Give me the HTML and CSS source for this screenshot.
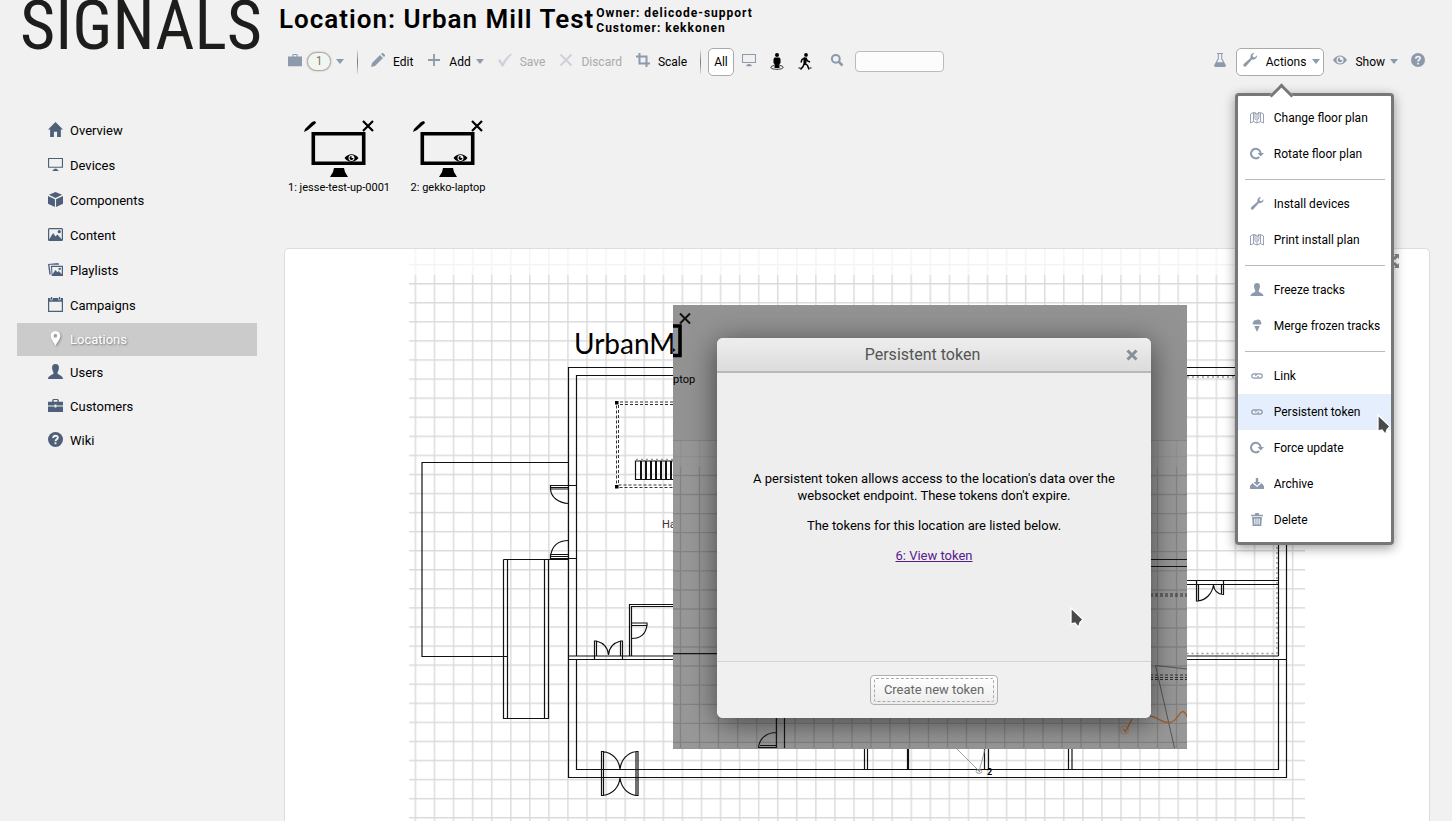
FILE: index.html
```html
<!DOCTYPE html>
<html lang="en">
<head>
<meta charset="utf-8">
<title>Location: Urban Mill Test</title>
<link rel="stylesheet" href="styles.css">
</head>
<body>
<svg class="sprite" aria-hidden="true">
  <symbol id="i-home" viewBox="0 0 14 14"><path d="M7 0 14 7H12V14H8.500V9H5.500V14H2V7H0Z"/></symbol>
  <symbol id="i-screen" viewBox="0 0 16 14"><path fill-rule="evenodd" d="M0 0H16V10.500H0ZM1.200 1.200V9.300H14.800V1.200ZM6.500 11.500H9.500V12.500H11V14H5V12.500H6.500Z"/></symbol>
  <symbol id="i-cube" viewBox="0 0 16 16"><path d="M8 0 15 3 8 6.500 1 3ZM0 4.200 7.400 7.800V16L0 12.500ZM16 4.200 8.600 7.800V16L16 12.500Z"/></symbol>
  <symbol id="i-image" viewBox="0 0 16 14"><path fill-rule="evenodd" d="M1 0H15L16 1V13L15 14H1L0 13V1ZM1.300 1.300V12L5.500 5.500 8 9 10 7 14.700 12V1.300Z"/><circle cx="12" cy="4" r="1.700"/></symbol>
  <symbol id="i-images" viewBox="0 0 16 14"><path d="M0 1 11 0 12 2H1.500L3 12 1.500 12.500Z"/><path fill-rule="evenodd" d="M3 3H16V14H4ZM4.300 4.300 4.800 12 8 7.500 10 10 11.500 8.500 14.700 12V4.300Z"/><circle cx="12.500" cy="6.300" r="1.300"/></symbol>
  <symbol id="i-calendar" viewBox="0 0 16 16"><path fill-rule="evenodd" d="M0 1H2.500V3.500H5V1H11V3.500H13.500V1H16V16H0ZM1.300 5V14.600H14.700V5Z"/><path d="M3 0H4.500V3H3ZM11.500 0H13V3H11.500Z"/></symbol>
  <symbol id="i-pin" viewBox="0 0 10 14"><path fill-rule="evenodd" d="M5 0C8 0 9.500 2 9.500 4.500 9.500 7.500 6.500 10.500 5 14 3.500 10.500 .5 7.500 .5 4.500 .5 2 2 0 5 0ZM5 2.800A1.700 1.700 0 1 0 5 6.300 1.700 1.700 0 1 0 5 2.800Z"/></symbol>
  <symbol id="i-user" viewBox="0 0 14 14"><path d="M7 0C9.300 0 10.300 1.500 10.200 3.700 10.100 6 9 7 8.800 8.500 8.800 10.500 14 10.500 14 14H0C0 10.500 5.200 10.500 5.200 8.500 5 7 3.900 6 3.800 3.700 3.700 1.500 4.700 0 7 0Z"/></symbol>
  <symbol id="i-case" viewBox="0 0 16 14"><path fill-rule="evenodd" d="M5 3V1L6 0H10L11 1V3H16V14H0V3ZM6.200 3H9.800V1.200H6.200Z"/></symbol>
  <symbol id="i-case2" viewBox="0 0 16 14"><path fill-rule="evenodd" d="M4.500 3V1L5.500 0H10.500L11.500 1V3H16V7H9V6H7V7H0V3ZM6 3H10V1.200H6ZM0 8H7V9H9V8H16V14H0Z"/></symbol>
  <symbol id="i-help" viewBox="0 0 16 16"><circle cx="8" cy="8" r="8"/><path fill="none" stroke="#f1f1f1" stroke-width="2" d="M5.500 6.500C5.500 3.300 10.700 3.300 10.500 6 10.400 7.700 8 7.700 8 9.800"/><path fill="#f1f1f1" d="M7 11H9V13H7Z"/></symbol>
  <symbol id="i-pencil" viewBox="0 0 14 14"><path d="M9 2 12 5 4 13 0 14 1 10ZM10 1 11 0H12L14 2V3L13 4Z"/></symbol>
  <symbol id="i-plus" viewBox="0 0 14 14"><path d="M6.100 1H7.900V6.100H13V7.900H7.900V13H6.100V7.900H1V6.100H6.100Z"/></symbol>
  <symbol id="i-check" viewBox="0 0 14 13"><path d="M0 7 2 5.500 4.500 9.500C6.500 5.500 9 2.500 13 0L14 1C10.500 4 7.500 8 5.500 13H4Z"/></symbol>
  <symbol id="i-x" viewBox="0 0 14 14"><path fill="none" stroke="currentColor" stroke-width="2" d="M1.500 1.500 12.500 12.500M12.500 1.500 1.500 12.500"/></symbol>
  <symbol id="i-crop" viewBox="0 0 14 14"><path fill="none" stroke="currentColor" stroke-width="2" d="M0 3.500H10.500V14M3.500 0V10.500H14"/></symbol>
  <symbol id="i-search" viewBox="0 0 14 14"><g fill="none" stroke="currentColor"><circle cx="5.800" cy="5.800" r="3.900" stroke-width="2"/><path stroke-width="2.500" d="M8.500 8.500 12.500 12.500"/></g></symbol>
  <symbol id="i-caret" viewBox="0 0 8 5"><path d="M0 0H8L4 5Z"/></symbol>
  <symbol id="i-stand" viewBox="0 0 14 17"><circle cx="7" cy="2" r="2"/><path d="M4.500 4.500H9.500L10.500 6V10L9.500 11V15H4.500V11L3.500 10V6Z"/><path fill="none" stroke="currentColor" stroke-width=".8" d="M4 12.500C-1 13.500 0 16.300 7 16.300S15 13.500 10 12.500"/></symbol>
  <symbol id="i-walk" viewBox="0 0 13 17"><circle cx="7.500" cy="1.900" r="1.900"/><path fill="none" stroke="currentColor" stroke-width="1.500" d="M6 10 9 12.500 10.500 16.500M6 10 4.500 13.500 2 16.500M6.500 5 3.500 6.500 2.500 9.500M7.500 5.500 9 8 11.500 9"/><path d="M5 4.500 8.500 4.500 7.800 10.500H5ZM0 14.500H2V15.500H0ZM11 14.500H13V15.500H11Z"/></symbol>
  <symbol id="i-flask" viewBox="0 0 12 14"><path fill-rule="evenodd" d="M3 0H9V1H8.200V5.500L12 12.500 11 14H1L0 12.500 3.800 5.500V1H3ZM4.800 1V6L3 9.200H9L7.200 6V1Z"/></symbol>
  <symbol id="i-wrench" viewBox="0 0 14 14"><path d="M11.500 0 9.500 2.300 10 4 11.700 4.500 14 2.300C14.300 5 12.200 7.200 9 6.500L3 13.200C2 14.600-.6 13 .7 11L7.500 5C7 2 8.600-.3 11.500 0Z"/></symbol>
  <symbol id="i-eye" viewBox="0 0 14 9"><path fill-rule="evenodd" d="M0 4.500C4-1.500 10-1.500 14 4.500 10 10.500 4 10.500 0 4.500ZM7 1A3.500 3.500 0 1 0 7 8 3.500 3.500 0 1 0 7 1Z"/><path d="M7 2.200V4.500H9.300A2.300 2.300 0 1 1 7 2.200Z"/></symbol>
  <symbol id="i-map" viewBox="0 0 14 12"><path fill="none" stroke="currentColor" stroke-width=".9" d="M.5 2.500 3.500 1 7 2.500 10.500 1 13.500 2.500V11.500L10.500 10 7 11.500 3.500 10 .5 11.500ZM3.500 1V10M7 2.500V11.500M10.500 1V10M5 .5V7L6 8.500M8.500 .5 9 5 8 8"/></symbol>
  <symbol id="i-rotate" viewBox="0 0 14 12"><path fill="none" stroke="currentColor" stroke-width="2" d="M9.200 9.500A4.800 4.800 0 1 1 10.600 5.500"/><path d="M7.500 5.500H14L10.700 9Z"/></symbol>
  <symbol id="i-ice" viewBox="0 0 10 14"><path d="M1 6C0 5 0 4 1 3.500 1 1.500 3 1 4 1.500 5 0 9 0 9 3 10.300 4 10 5 9 6ZM2 7.500H8L5 14Z"/></symbol>
  <symbol id="i-link" viewBox="0 0 12 6"><path fill="none" stroke="currentColor" stroke-width="1.200" d="M5.300 .8H3A2.200 2.200 0 0 0 3 5.200H5.500A2 2 0 0 0 7.200 2.800M6.700 5.200H9A2.200 2.200 0 0 0 9 .8H6.500A2 2 0 0 0 4.800 3.200"/></symbol>
  <symbol id="i-archive" viewBox="0 0 14 11"><path d="M5.800 0H8.200V4H10.500L7 7.500 3.500 4H5.800ZM2.500 5 4 6.500 7 9 10 6.500 11.500 5 14 8V11H0V8Z"/></symbol>
  <symbol id="i-trash" viewBox="0 0 11 12"><path fill-rule="evenodd" d="M0 1.500H3.500L4 0H7L7.500 1.500H11V3H0ZM1 3.800H10L9.500 12H1.500ZM3 5V10.500H4V5ZM5 5V10.500H6V5ZM7 5V10.500H8V5Z"/></symbol>
  <symbol id="i-expand" viewBox="0 0 14 14"><path d="M0 0H5L3.500 1.500 6 4 4 6 1.500 3.500 0 5ZM14 0V5L12.500 3.500 10 6 8 4 10.500 1.500 9 0ZM0 14V9L1.500 10.500 4 8 6 10 3.500 12.500 5 14ZM14 14H9L10.500 12.500 8 10 10 8 12.500 10.500 14 9Z"/></symbol>
  <symbol id="i-cursor" viewBox="0 0 14 22"><path fill="#4a4a4a" stroke="#fff" stroke-width="1.300" d="M1 1V17L5 16 8.500 20.500 10 15.500 13 12.500Z"/></symbol>
  <symbol id="i-device" viewBox="0 0 72 58"><path d="M1 12 2 9 9 2 12 1 13 3 5 10Z"/><path fill="none" stroke="currentColor" stroke-width="2.200" d="M60 1 70 11M70 1 60 11"/><path fill="none" stroke="currentColor" stroke-width="3.600" d="M10.300 13.800H60.700V43.200H10.300Z"/><path d="M31 48H41L42 52 45 57H27L30 52Z"/><path fill-rule="evenodd" d="M41.500 38C45.500 33 51.500 33 55.500 38 51.500 43 45.500 43 41.500 38ZM48.500 35A3 3 0 1 0 48.500 41 3 3 0 1 0 48.500 35Z"/><path d="M48.500 36V38H50.500A2 2 0 1 1 48.500 36Z"/></symbol>
</svg>

<div class="app">
  <aside class="sidebar">
    <div class="logo">SIGNALS</div>
    <nav class="nav">
      <a class="nav-item" href="#"><svg class="nav-icon"><use href="#i-home"/></svg>Overview</a>
      <a class="nav-item" href="#"><svg class="nav-icon"><use href="#i-screen"/></svg>Devices</a>
      <a class="nav-item" href="#"><svg class="nav-icon"><use href="#i-cube"/></svg>Components</a>
      <a class="nav-item" href="#"><svg class="nav-icon"><use href="#i-image"/></svg>Content</a>
      <a class="nav-item" href="#"><svg class="nav-icon"><use href="#i-images"/></svg>Playlists</a>
      <a class="nav-item" href="#"><svg class="nav-icon"><use href="#i-calendar"/></svg>Campaigns</a>
      <a class="nav-item compact active" href="#"><svg class="nav-icon"><use href="#i-pin"/></svg>Locations</a>
      <a class="nav-item compact" href="#"><svg class="nav-icon"><use href="#i-user"/></svg>Users</a>
      <a class="nav-item" href="#"><svg class="nav-icon"><use href="#i-case2"/></svg>Customers</a>
      <a class="nav-item compact" href="#"><svg class="nav-icon"><use href="#i-help"/></svg>Wiki</a>
    </nav>
  </aside>

  <main class="main">
    <header class="heading">
      <h1 class="title">Location: Urban Mill Test</h1>
      <div class="owner">Owner: delicode-support<br>Customer: kekkonen</div>
    </header>

    <div class="toolbar">
      <button class="tool tight" aria-label="Workspace"><svg class="icon"><use href="#i-case"/></svg><span class="badge">1</span><svg class="caret"><use href="#i-caret"/></svg></button>
      <span class="divider"></span>
      <button class="tool"><svg class="icon"><use href="#i-pencil"/></svg>Edit</button>
      <button class="tool"><svg class="icon"><use href="#i-plus"/></svg>Add<svg class="caret"><use href="#i-caret"/></svg></button>
      <button class="tool" disabled><svg class="icon"><use href="#i-check"/></svg>Save</button>
      <button class="tool" disabled><svg class="icon"><use href="#i-x"/></svg>Discard</button>
      <button class="tool"><svg class="icon"><use href="#i-crop"/></svg>Scale</button>
      <span class="divider"></span>
      <div class="filters">
        <button class="tool boxed all">All</button>
        <button class="tool" aria-label="Screens"><svg class="icon"><use href="#i-screen"/></svg></button>
        <button class="tool dark" aria-label="Standing"><svg class="figure"><use href="#i-stand"/></svg></button>
        <button class="tool dark" aria-label="Walking"><svg class="figure"><use href="#i-walk"/></svg></button>
      </div>
      <label class="search"><svg class="icon"><use href="#i-search"/></svg><input class="search-input" type="text" aria-label="Search"></label>
      <div class="tools-right">
        <button class="tool" aria-label="Experiments"><svg class="icon"><use href="#i-flask"/></svg></button>
        <div class="menu-anchor">
          <button class="tool boxed actions"><svg class="icon"><use href="#i-wrench"/></svg>Actions<svg class="caret"><use href="#i-caret"/></svg></button>
          <div class="menu">
            <button class="menu-item"><svg class="menu-icon"><use href="#i-map"/></svg>Change floor plan</button>
            <button class="menu-item"><svg class="menu-icon"><use href="#i-rotate"/></svg>Rotate floor plan</button>
            <hr class="menu-rule">
            <button class="menu-item"><svg class="menu-icon"><use href="#i-wrench"/></svg>Install devices</button>
            <button class="menu-item"><svg class="menu-icon"><use href="#i-map"/></svg>Print install plan</button>
            <hr class="menu-rule">
            <button class="menu-item"><svg class="menu-icon"><use href="#i-user"/></svg>Freeze tracks</button>
            <button class="menu-item"><svg class="menu-icon"><use href="#i-ice"/></svg>Merge frozen tracks</button>
            <hr class="menu-rule">
            <button class="menu-item"><svg class="menu-icon small"><use href="#i-link"/></svg>Link</button>
            <button class="menu-item hover"><svg class="menu-icon small"><use href="#i-link"/></svg>Persistent token</button>
            <button class="menu-item"><svg class="menu-icon"><use href="#i-rotate"/></svg>Force update</button>
            <button class="menu-item"><svg class="menu-icon"><use href="#i-archive"/></svg>Archive</button>
            <button class="menu-item"><svg class="menu-icon"><use href="#i-trash"/></svg>Delete</button>
            <svg class="cursor menu-cursor"><use href="#i-cursor"/></svg>
          </div>
        </div>
        <button class="tool show"><svg class="icon"><use href="#i-eye"/></svg>Show<svg class="caret"><use href="#i-caret"/></svg></button>
        <button class="tool help" aria-label="Help"><svg class="icon"><use href="#i-help"/></svg></button>
      </div>
    </div>

    <div class="devices">
      <figure class="device"><svg class="device-icon"><use href="#i-device"/></svg><figcaption>1: jesse-test-up-0001</figcaption></figure>
      <figure class="device"><svg class="device-icon"><use href="#i-device"/></svg><figcaption>2: gekko-laptop</figcaption></figure>
    </div>

    <section class="canvas">
      <svg class="plan" viewBox="285 249 1144 573" preserveAspectRatio="xMinYMin slice">
        <defs>
          <pattern id="gridv" patternUnits="userSpaceOnUse" x="414.600" y="249" width="19.070" height="600"><path d="M.8 0V600" stroke="#dadada" stroke-width="1.400"/></pattern>
          <pattern id="gridh" patternUnits="userSpaceOnUse" x="409" y="283" width="1000" height="19.070"><path d="M0 .8H1000" stroke="#dadada" stroke-width="1.400"/></pattern>
        </defs>
        <g opacity=".3"><rect x="409" y="249" width="885" height="26" fill="url(#gridv)"/><rect x="409" y="255" width="896" height="20" fill="url(#gridh)"/></g>
        <rect x="409" y="275" width="885" height="546" fill="url(#gridv)"/>
        <rect x="409" y="275" width="896" height="546" fill="url(#gridh)"/>
        <text class="plan-logo" x="574" y="354">UrbanM</text>
        <text class="plan-label" x="662" y="528">Hall</text>
        <g fill="none" stroke="#111" stroke-width="1.200">
          <path d="M568.500 777.500V367.500H1286.500V777.500ZM576.500 656V375.500H1278.500V656M576.500 660V769.500H1278.500V660M568.500 656H1278.500M568.500 659.500H1286.500"/>
          <path d="M568.500 462.500H422V656.500H507.500M503.500 559.500H568.500M503.500 559.500V718.500H548.500V559.500M507.500 559.500V718.500M544.500 559.500V718.500"/>
          <path d="M576.500 485.500H550.500V489H568.500M550.500 487.500H568.500M550.500 489C551 497 558 503 568.500 503.500M576.500 558.500H550.500V554.500H568.500M551 556.500H568.500M550.500 556C552 546 558 540.500 568.500 540.500"/>
          <path d="M673 604.500H629.500V656M673 606.500H631.500V656M631.500 623H647V625.500H631.500M647 625C646 633 641 638.500 631.500 638.500"/>
          <path d="M594.500 659V641H596.500V656M622.500 659V641H620.500V656M596.500 641C604 643 608 648 608.500 655 609 648 613 643 620.500 641"/>
          <path d="M601.500 795.500V751.500H603.500V795.500ZM638 795.500V751.500H636V795.500ZM603 751.500C613 753 619 760 620 769 621 760 627 753 636 751.500M603 795.500C613 794 619 787 620 778 621 787 627 794 636 795.500"/>
          <path d="M1187 580.500H1278.500M1187 584.500H1278.500M1196.500 580.500V601H1198.500V584.500M1198 601C1206 600 1212 594 1213.500 585 1214 590 1217 594 1223.500 594.500M1223.500 581V594.500H1221.500V584.500"/>
          <path d="M864.500 740V769.500M867.500 740V769.500M907.500 740V769.500M908.500 740V769.500M984.500 740V769.500M988.500 740V769.500M1068.500 740V769.500M1072 740V769.500"/>
          <path d="M635.500 480V461H690M635.500 479.500H690"/>
          <path stroke-width="2" d="M641 461V480M646 461V480M651 461V480M656 461V480M661 461V480M666 461V480M671 461V480"/>
        </g>
        <g fill="none" stroke="#333" stroke-dasharray="3 2"><path d="M673 402H616.500V487.500H673M673 404.500H618.500V485H673"/></g>
        <g fill="none" stroke="#999" stroke-dasharray="2 3" stroke-width="1.500"><path d="M1187 377H1277V653.500H1187M636 459.500H673"/></g>
        <path d="M615 401H618.500V404.500H615ZM615 485H618.500V488.500H615Z"/>
        <path fill="none" stroke="#888" stroke-width=".8" d="M955 747 980 772M979 772 985 749M976 771.500A3 1.800 0 1 0 982 771.500A3 1.800 0 1 0 976 771.500"/>
        <text class="plan-number" x="987" y="775">2</text>
      </svg>
      <svg class="expand"><use href="#i-expand"/></svg>

      <div class="overlay">
        <svg class="overlay-plan" viewBox="673 305 514 443">
          <rect x="673" y="440" width="514" height="310" fill="#989898"/>
          <path d="M673 440.500H1187" stroke="#858585"/>
          <g stroke="#828282" stroke-width="1.300">
            <path fill="none" d="M680.500 467V748M699.500 467V748M718.500 467V748M737.700 467V748M756.700 467V748M775.800 467V748M795 467V748M814 467V748M833 467V748M852 467V748M871 467V748M890 467V748M909.500 467V748M928.500 467V748M947.500 467V748M966.500 467V748M985.700 467V748M1004.700 467V748M1023.800 467V748M1043 467V748M1062 467V748M1081 467V748M1100 467V748M1119 467V748M1138 467V748M1157.500 467V748M1176.500 467V748"/>
            <path d="M673 475.500H1187M673 494.500H1187M673 513.600H1187M673 532.700H1187M673 551.700H1187M673 570.800H1187M673 590H1187M673 609H1187M673 628H1187M673 647H1187M673 666H1187M673 685.200H1187M673 704.300H1187M673 723.300H1187M673 742.400H1187"/>
            <path opacity=".35" d="M673 456.500H1187M680.500 441V467M699.500 441V467M1157.500 441V467M1176.500 441V467"/>
          </g>
          <path fill="none" stroke="#111" stroke-width="2" d="M680 313.500 690 323.500M690 313.500 680 323.500"/>
          <path fill="none" stroke="#000" stroke-width="3.600" d="M673 326H680V355.500H673"/>
          <path d="M673 348 675.500 350 673 352Z"/>
          <text class="overlay-label" x="673" y="383">ptop</text>
          <g fill="none" stroke="#161616" stroke-width="1.200">
            <path d="M673 653.700H720M1150 559.500H1187M1150 566.500H1187M776.500 700V748M784.500 700V748M758.500 747.500H776.500M760 745.500H776.500M758.500 748C759 739 766 732.500 776.500 732.500"/>
            <path stroke-width=".8" stroke-dasharray="3 2" d="M1150 594H1187M1150 596H1187M1150 675H1187M1150 677.500H1187M1150 679.500H1187"/>
          </g>
          <path fill="none" stroke="#555" d="M1187 669 1155.500 665.500 1174.500 748"/>
          <g fill="none" stroke="#a06030"><path stroke-width="1.400" d="M1150 716C1158 717 1161 723 1169 722.500 1178 722 1178 712 1183 711.500 1185 712 1186 714 1187 717M1123 729 1125.500 731.500 1132 719"/><circle cx="1124.500" cy="730" r="4" stroke-width=".5"/></g>
        </svg>
        <div class="dialog" role="dialog" aria-labelledby="dlg-title">
          <div class="dialog-head">
            <h2 class="dialog-title" id="dlg-title">Persistent token</h2>
            <button class="close" aria-label="Close"><svg class="close-icon" viewBox="0 0 12 12"><path d="M1.500 1.500 10.500 10.500M10.500 1.500 1.500 10.500"/></svg></button>
          </div>
          <div class="dialog-body">
            <p>A persistent token allows access to the location's data over the websocket endpoint. These tokens don't expire.</p>
            <p>The tokens for this location are listed below.</p>
            <p><a class="token-link" href="#">6: View token</a></p>
          </div>
          <div class="dialog-foot"><button class="create"><span class="create-inner">Create new token</span></button></div>
        </div>
        <svg class="cursor dialog-cursor"><use href="#i-cursor"/></svg>
      </div>
    </section>
  </main>
</div>
</body>
</html>
```
FILE: styles.css
```css
* { box-sizing: border-box; }

body {
  margin: 0;
  overflow: hidden;
  background: #f1f1f1;
  color: #000;
  font-family: Roboto, "Liberation Sans", sans-serif;
  font-size: 13px;
}

button {
  margin: 0;
  padding: 0;
  border: 0;
  background: none;
  color: inherit;
  font: inherit;
}

svg { display: block; flex: none; fill: currentColor; }

.sprite { position: absolute; width: 0; height: 0; }

.app { display: flex; height: 100vh; }

/* Sidebar */
.sidebar { flex: none; width: 279px; }

.logo {
  height: 113px;
  padding-left: 20px;
  color: #1d1d1b;
  font-family: "Roboto Condensed", "Liberation Sans Narrow", Roboto, sans-serif;
  font-size: 68px;
  font-weight: 400;
  line-height: 53px;
}

.nav { margin: 0 22px 0 17px; }

.nav-item {
  display: flex;
  align-items: center;
  gap: 7px;
  height: 35px;
  padding-left: 31px;
  color: #000;
  text-decoration: none;
}

.nav-item.compact { height: 33px; }

.nav-item.active {
  background: #cbcbcb;
  color: #fff;
  text-shadow: 1px 1px 2px #777;
}

.nav-icon { width: 15px; height: 15px; margin-bottom: 2px; color: #4e6079; }
.active .nav-icon { color: #fff; filter: drop-shadow(1px 1px 1px #888); }

/* Header */
.main { display: flex; flex: 1; flex-direction: column; min-width: 0; }

.heading { display: flex; gap: 2px; height: 47px; }

.title {
  margin: 0;
  font-size: 26px;
  font-weight: 600;
  letter-spacing: 1px;
  line-height: 38px;
}

.owner {
  padding-top: 6px;
  font-size: 12px;
  font-weight: 700;
  letter-spacing: 1px;
  line-height: 15px;
}

.toolbar {
  display: flex;
  align-items: center;
  gap: 14px;
  height: 29px;
  padding: 0 27px 0 9px;
  font-size: 12px;
}

.tool { display: flex; align-items: center; gap: 8px; height: 28px; }
.tool:disabled { color: #aaa; }
.tool:disabled .icon { opacity: .35; }
.tight { gap: 5px; }

.icon { width: 14px; height: 14px; margin-bottom: 3px; color: #8c9aac; }
.caret { width: 8px; height: 5px; color: #8c9aac; }
.tool .caret { margin-left: -3px; }
.tight .caret { margin-left: 0; }
.dark { color: #000; }
.figure { width: 14px; height: 17px; }

.badge {
  width: 24px;
  height: 19px;
  border: 1px solid #aaa;
  border-radius: 10px;
  background: #f1f7ee;
  box-shadow: 0 0 2px #aaa;
  color: #777;
  line-height: 17px;
  text-align: center;
}

.divider {
  width: 1px;
  height: 24px;
  margin: 0 -1px;
  background: linear-gradient(#ddd, #777, #ddd);
}

.filters { display: flex; align-items: center; gap: 14px; margin-left: -6px; }

.boxed {
  padding: 0 5px;
  border: 1px solid #aaa;
  border-radius: 5px;
  background: #fff;
}

.actions { gap: 9px; padding: 0 3px 0 6px; }
.all { margin-right: -6px; }

.search { display: flex; align-items: center; gap: 11px; margin-left: 4px; }

.search-input {
  width: 89px;
  height: 21px;
  border: 1px solid #bbb;
  border-radius: 4px;
  background: #fcfcfc;
}

.tools-right { display: flex; align-items: center; gap: 9px; margin-left: auto; }
.help { margin-left: 4px; }

/* Actions menu */
.menu-anchor { position: relative; }

.menu {
  position: absolute;
  z-index: 5;
  top: 45px;
  left: -1px;
  width: 159px;
  padding: 4px 0;
  border: 3px solid #777;
  border-radius: 4px;
  background: #fff;
  box-shadow: 0 3px 12px rgba(0, 0, 0, .4);
}

.menu::before {
  position: absolute;
  top: -9px;
  left: 35px;
  width: 14px;
  height: 14px;
  border: solid #777;
  border-width: 3px 0 0 3px;
  background: #fff;
  content: "";
  transform: rotate(45deg);
}

.menu-item {
  display: flex;
  align-items: center;
  gap: 10px;
  width: 100%;
  height: 36px;
  padding-left: 12px;
  white-space: nowrap;
}

.menu-item.hover { background: #e4eefd; }
.menu-icon { width: 14px; height: 13px; color: #8c9aac; }
.menu-icon.small { height: 6px; }

.menu-rule {
  height: 1px;
  margin: 7px 6px 6px 7px;
  border: 0;
  background: #bbb;
}

.cursor { position: absolute; width: 14px; height: 22px; }
.menu-cursor { right: 0; bottom: 106px; }

/* Devices */
.devices {
  display: flex;
  gap: 5px;
  height: 172px;
  padding: 44px 0 0 8px;
  font-size: 11px;
}

.device {
  display: flex;
  flex-direction: column;
  align-items: center;
  min-width: 104px;
  margin: 0;
}

.device-icon { width: 72px; height: 58px; }
.device figcaption { margin-top: 3px; line-height: 13px; }

/* Floor plan */
.canvas {
  position: relative;
  flex: 1;
  min-height: 0;
  margin: 0 22px 0 5px;
  overflow: hidden;
  border: 1px solid #ddd;
  border-bottom: 0;
  border-radius: 5px 5px 0 0;
  background: #fff;
}

.plan { width: 100%; height: 100%; }
.plan-logo { font-family: Lato, sans-serif; font-size: 28px; }
.plan-label { font-size: 11px; fill: #333; }
.plan-number { font-size: 9px; font-weight: 700; }
.expand { position: absolute; top: 5px; right: 30px; width: 14px; height: 14px; color: #888; }

.overlay {
  position: absolute;
  top: 56px;
  left: 388px;
  width: 514px;
  overflow: hidden;
  padding: 33px 36px 31px 44px;
  background: #939393;
}

.overlay-plan { position: absolute; top: 0; left: 0; width: 514px; height: 443px; }
.overlay-label { font-size: 11px; }

.dialog {
  position: relative;
  border-radius: 6px;
  background: #eee;
  box-shadow: 0 5px 30px rgba(0, 0, 0, .55);
}

.dialog-head {
  display: flex;
  align-items: center;
  height: 35px;
  padding: 0 13px 0 2px;
  border-bottom: 2px solid #b8b8b8;
  border-radius: 6px 6px 0 0;
  background: linear-gradient(#eee, #dcdcdc);
}

.dialog-title {
  flex: 1;
  margin: 0;
  color: #555;
  font-size: 16px;
  font-weight: 400;
  text-align: center;
}

.close-icon { width: 12px; height: 12px; fill: none; stroke: #84919b; stroke-width: 3px; }

.dialog-body {
  height: 288px;
  padding: 97px 32px 0;
  line-height: 17px;
  text-align: center;
}

.dialog-body p { margin: 0 0 13px; }
.token-link { color: #551a8b; }

.dialog-foot {
  display: flex;
  justify-content: center;
  padding: 13px 0;
  border-top: 1px solid #d4d4d4;
  border-radius: 0 0 6px 6px;
  background: #f0f0f0;
}

.create {
  height: 30px;
  padding: 2px 3px;
  border: 1px solid #b0b0b0;
  border-radius: 4px;
  background: linear-gradient(#fff, #ececec);
}

.create-inner {
  display: block;
  padding: 0 9px;
  border: 1px dashed #aaa;
  border-radius: 2px;
  color: #666;
  line-height: 22px;
}

.dialog-cursor { top: 302px; left: 397px; }
```
